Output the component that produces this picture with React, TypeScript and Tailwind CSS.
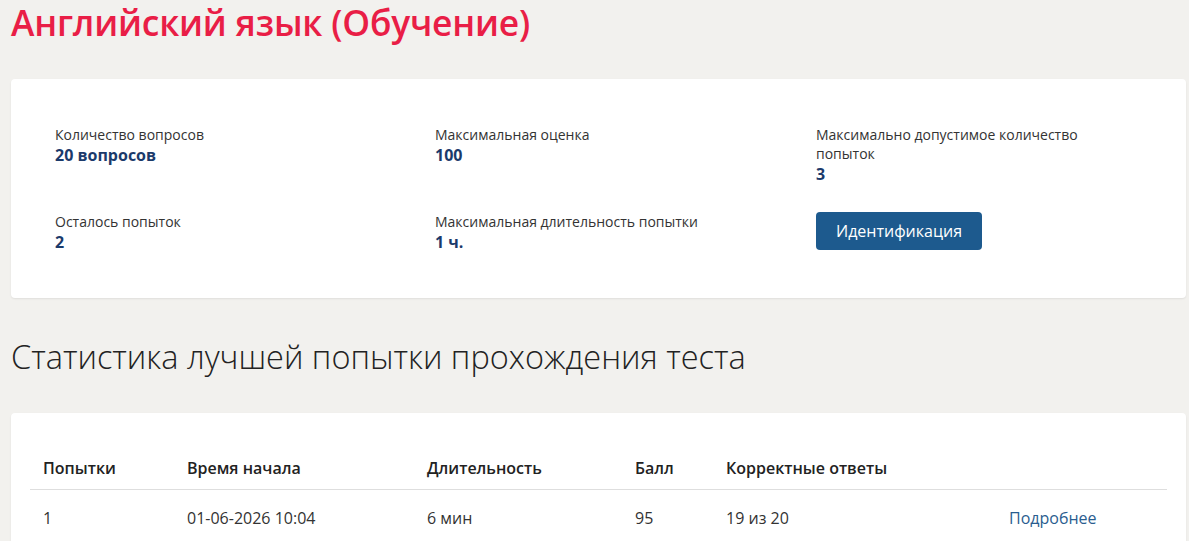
import React from 'react';

const info = [
  { label: 'Количество вопросов', value: '20 вопросов' },
  { label: 'Максимальная оценка', value: '100' },
  { label: 'Максимально допустимое количество попыток', value: '3' },
  { label: 'Осталось попыток', value: '2' },
  { label: 'Максимальная длительность попытки', value: '1 ч.' },
];

const attempts = [
  { n: '1', start: '01-06-2026 10:04', duration: '6 мин', score: '95', correct: '19 из 20' },
];

export default function App() {
  return (
    <div className="min-h-screen bg-[#f2f1ee] pl-[11px] pr-[3px] text-[#222] font-['Open_Sans',sans-serif]">
      <h1 className="pt-[2px] text-[35.4px] leading-[40px] font-semibold text-[#e91e46] tracking-[-0.2px]">
        Английский язык (Обучение)
      </h1>

      <div className="mt-[37px] bg-white rounded-[4px] shadow-[0_1px_2px_rgba(0,0,0,0.08)] pt-[46px] pb-[46px] pl-[44px] pr-[44px]">
        <div className="grid grid-cols-[380px_381px_1fr] gap-y-[27px]">
          {info.slice(0, 3).map((item) => (
            <div key={item.label} className="pr-[40px]">
              <div className="text-[14px] leading-[19px] text-[#333]">{item.label}</div>
              <div className="text-[16px] leading-[22px] font-bold text-[#1b3a6b]">{item.value}</div>
            </div>
          ))}
          {info.slice(3).map((item) => (
            <div key={item.label} className="pr-[40px]">
              <div className="text-[14px] leading-[20px] text-[#333]">{item.label}</div>
              <div className="text-[16px] leading-[20px] font-bold text-[#1b3a6b]">{item.value}</div>
            </div>
          ))}
          <div>
            <button className="h-[38px] px-[20px] rounded-[4px] bg-[#1d5a8e] text-white text-[16px]">
              Идентификация
            </button>
          </div>
        </div>
      </div>

      <h2 className="mt-[38px] text-[32.5px] leading-[42px] font-light text-[#222]">
        Статистика лучшей попытки прохождения теста
      </h2>

      <div className="mt-[35px] bg-white rounded-[4px] shadow-[0_1px_2px_rgba(0,0,0,0.08)] pt-[34px] pb-[20px] px-[19px]">
        <table className="w-full table-fixed border-collapse text-[16px]">
          <colgroup>
            <col className="w-[144px]" />
            <col className="w-[240px]" />
            <col className="w-[208px]" />
            <col className="w-[91px]" />
            <col className="w-[283px]" />
            <col />
          </colgroup>
          <thead>
            <tr className="border-b border-[#dedede] text-left">
              <th className="pl-[13px] py-[9px] font-semibold">Попытки</th>
              <th className="pl-[13px] py-[9px] font-semibold">Время начала</th>
              <th className="pl-[13px] py-[9px] font-semibold">Длительность</th>
              <th className="pl-[13px] py-[9px] font-semibold">Балл</th>
              <th className="pl-[13px] py-[9px] font-semibold">Корректные ответы</th>
              <th />
            </tr>
          </thead>
          <tbody>
            {attempts.map((a) => (
              <tr key={a.n} className="text-[#333]">
                <td className="pl-[13px] pt-[16px] pb-[12px]">{a.n}</td>
                <td className="pl-[13px] pt-[16px] pb-[12px]">{a.start}</td>
                <td className="pl-[13px] pt-[16px] pb-[12px]">{a.duration}</td>
                <td className="pl-[13px] pt-[16px] pb-[12px]">{a.score}</td>
                <td className="pl-[13px] pt-[16px] pb-[12px]">{a.correct}</td>
                <td className="pl-[13px] pt-[16px] pb-[12px]">
                  <a href="#" className="text-[#2a5d8f]">Подробнее</a>
                </td>
              </tr>
            ))}
          </tbody>
        </table>
      </div>
    </div>
  );
}
